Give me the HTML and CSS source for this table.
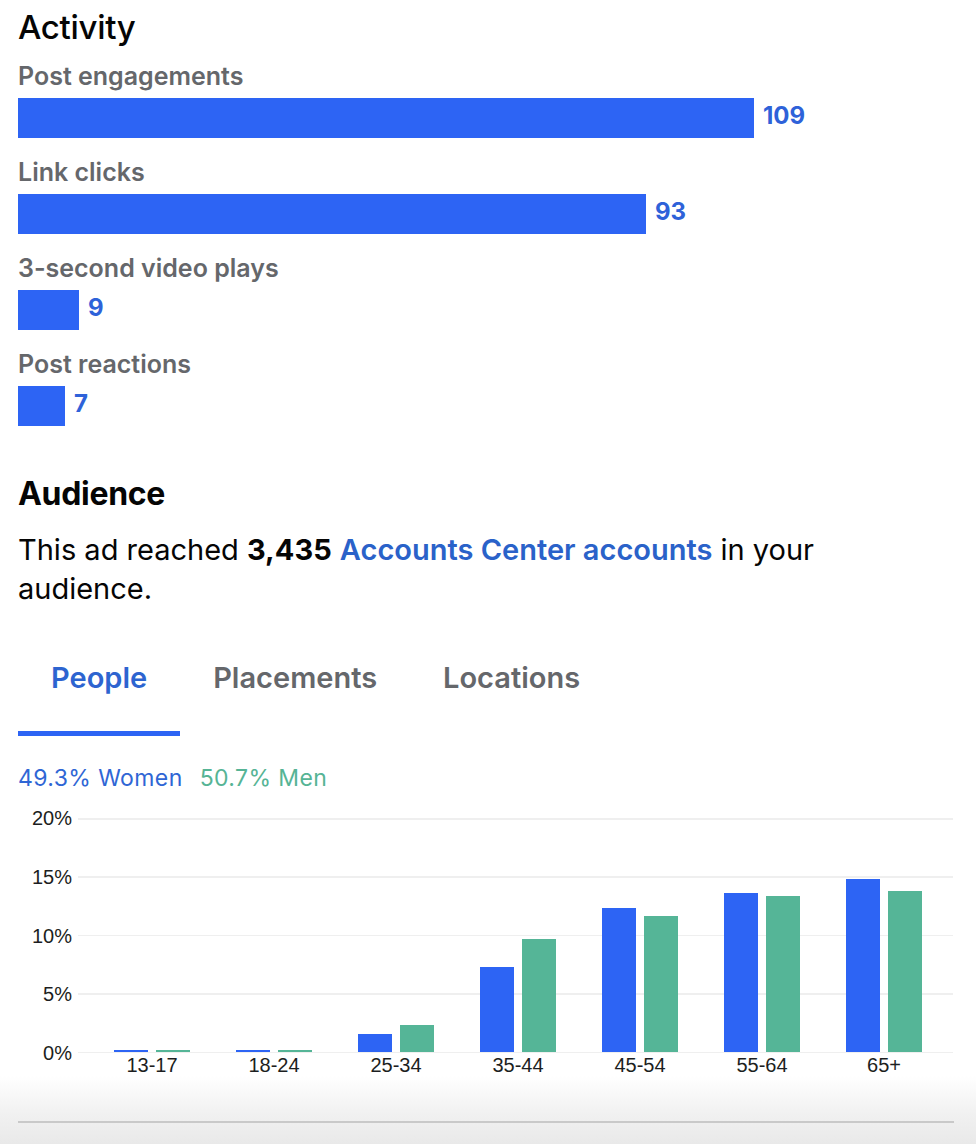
FILE: index.html
```html
<!DOCTYPE html>
<html lang="en">
<head>
<meta charset="utf-8">
<title>Ad insights</title>
<link rel="stylesheet" href="styles.css">
</head>
<body>
<main class="page">
  <section class="activity">
    <h1 class="section-title">Activity</h1>
    <div class="metric">
      <div class="metric-label">Post engagements</div>
      <div class="metric-row"><div class="metric-bar" style="width:736px"></div><span class="metric-value">109</span></div>
    </div>
    <div class="metric">
      <div class="metric-label">Link clicks</div>
      <div class="metric-row"><div class="metric-bar" style="width:628px"></div><span class="metric-value">93</span></div>
    </div>
    <div class="metric">
      <div class="metric-label">3-second video plays</div>
      <div class="metric-row"><div class="metric-bar" style="width:61px"></div><span class="metric-value">9</span></div>
    </div>
    <div class="metric">
      <div class="metric-label">Post reactions</div>
      <div class="metric-row"><div class="metric-bar" style="width:47px"></div><span class="metric-value">7</span></div>
    </div>
  </section>

  <section class="audience">
    <h2 class="audience-title">Audience</h2>
    <p class="audience-text">This ad reached <strong>3,435</strong> <a class="link" href="#">Accounts Center accounts</a> in your audience.</p>

    <nav class="tabs">
      <div class="tab tab-active">People</div>
      <div class="tab">Placements</div>
      <div class="tab">Locations</div>
    </nav>

    <div class="legend">
      <span class="legend-women">49.3% Women</span>
      <span class="legend-men">50.7% Men</span>
    </div>

    <div class="chart">
      <div class="yaxis">
        <span>20%</span><span>15%</span><span>10%</span><span>5%</span><span>0%</span>
      </div>
      <div class="plot">
        <div class="group"><div class="bar women" style="height:2px"></div><div class="bar men" style="height:2px"></div></div>
        <div class="group"><div class="bar women" style="height:2px"></div><div class="bar men" style="height:2px"></div></div>
        <div class="group"><div class="bar women" style="height:18px"></div><div class="bar men" style="height:27px"></div></div>
        <div class="group"><div class="bar women" style="height:85px"></div><div class="bar men" style="height:113px"></div></div>
        <div class="group"><div class="bar women" style="height:144px"></div><div class="bar men" style="height:136px"></div></div>
        <div class="group"><div class="bar women" style="height:159px"></div><div class="bar men" style="height:156px"></div></div>
        <div class="group"><div class="bar women" style="height:173px"></div><div class="bar men" style="height:161px"></div></div>
      </div>
      <div class="xaxis">
        <span>13-17</span><span>18-24</span><span>25-34</span><span>35-44</span><span>45-54</span><span>55-64</span><span>65+</span>
      </div>
    </div>
  </section>
</main>
<footer class="footer"><div class="footer-line"></div></footer>
</body>
</html>
```
FILE: styles.css
```css
* { box-sizing: border-box; }

html, body {
  margin: 0;
  padding: 0;
  background: #ffffff;
}

body {
  font-family: Inter, "Noto Sans", "Liberation Sans", sans-serif;
  color: #050505;
  width: 976px;
  height: 1144px;
  overflow: hidden;
}

.page {
  padding: 7px 23px 0 18px;
}

.section-title {
  margin: 0 0 14px;
  font-size: 33px;
  line-height: 40px;
  font-weight: 500;
  letter-spacing: -0.3px;
}

.metric {
  margin-bottom: 19px;
}

.metric-label {
  font-size: 25px;
  line-height: 31px;
  font-weight: 600;
  color: #65676b;
  margin-bottom: 6px;
}

.metric-row {
  display: flex;
  align-items: center;
  height: 40px;
}

.metric-bar {
  height: 40px;
  background: #2d64f4;
  flex: none;
}

.metric-value {
  margin-left: 9px;
  font-size: 24px;
  line-height: 36px;
  font-weight: 700;
  color: #2e62d9;
  align-self: flex-start;
}

.audience {
  margin-top: 48px;
}

.audience-title {
  margin: 0 0 16px;
  font-size: 32px;
  line-height: 40px;
  font-weight: 700;
  letter-spacing: -0.3px;
}

.audience-text {
  margin: 0;
  font-size: 29px;
  line-height: 39px;
  max-width: 900px;
  color: #050505;
}

.audience-text strong {
  font-weight: 700;
}

.link {
  color: #2a62c9;
  font-weight: 600;
  text-decoration: none;
}

.tabs {
  display: flex;
  margin-top: 50px;
}

.tab {
  padding: 0 33px 34px;
  font-size: 29px;
  line-height: 39px;
  font-weight: 600;
  color: #65676b;
  border-bottom: 5px solid transparent;
}

.tab-active {
  color: #2d64d0;
  border-bottom-color: #2d64f4;
}

.legend {
  display: flex;
  gap: 17px;
  margin-top: 28px;
  font-size: 23px;
  line-height: 28px;
  letter-spacing: 0.4px;
}

.legend-women { color: #2f66d5; }
.legend-men { color: #56b495; }

.chart {
  display: grid;
  grid-template-columns: 54px 1fr;
  column-gap: 6px;
  margin-top: 26px;
  font-family: "Liberation Sans", Arial, sans-serif;
  font-size: 20px;
  color: #1c1e21;
}

.yaxis {
  display: flex;
  flex-direction: column;
  justify-content: space-between;
  align-items: flex-end;
  margin: -11px 0;
  line-height: 22px;
}

.plot {
  height: 235px;
  display: grid;
  grid-template-columns: repeat(7, 1fr);
  padding: 0 8px 0 13px;
  background: repeating-linear-gradient(to bottom, #efefef 0, #efefef 1.5px, transparent 1.5px, transparent 58.5px);
  border-bottom: 1.5px solid #efefef;
}

.group {
  display: flex;
  justify-content: center;
  align-items: flex-end;
  gap: 8px;
}

.bar {
  width: 34px;
}

.bar.women { background: #2d64f4; }
.bar.men { background: #55b597; }

.xaxis {
  grid-column: 2;
  display: grid;
  grid-template-columns: repeat(7, 1fr);
  padding: 1px 8px 0 13px;
  line-height: 22px;
  text-align: center;
}

.footer {
  position: absolute;
  left: 0;
  right: 0;
  top: 1076px;
  height: 68px;
  background: linear-gradient(to bottom, rgba(255,255,255,0) 0%, #f1f1f1 55%, #e9e9e9 100%);
  padding: 45px 22px 0 18px;
}

.footer-line {
  height: 2px;
  background: #c9c9c9;
}
```
